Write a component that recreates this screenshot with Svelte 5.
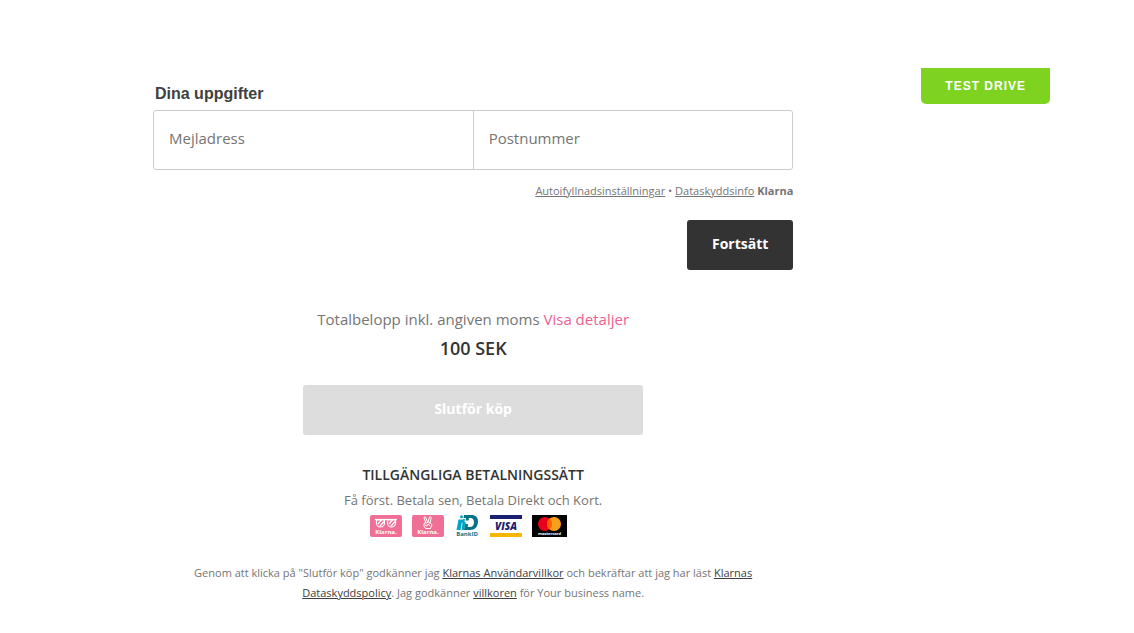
<script lang="ts">
  let email = $state("");
  let postcode = $state("");
  let amount = $state(100);
</script>

<div class="page">
  <main class="checkout">
    <form class="details" onsubmit={(e) => e.preventDefault()}>
      <h2>Dina uppgifter</h2>
      <div class="fields">
        <input type="email" aria-label="Mejladress" placeholder="Mejladress" bind:value={email} />
        <input type="text" aria-label="Postnummer" placeholder="Postnummer" bind:value={postcode} />
      </div>
      <p class="info">
        <a href="#autofill">Autoifyllnadsinställningar</a> • <a href="#privacy">Dataskyddsinfo</a>
        <strong>Klarna</strong>
      </p>
      <button class="btn continue" type="submit">Fortsätt</button>
    </form>

    <section class="summary">
      <p class="total">Totalbelopp inkl. angiven moms <a href="#details">Visa detaljer</a></p>
      <p class="amount">{amount} SEK</p>
      <button class="btn buy" type="button" disabled>Slutför köp</button>
    </section>

    <section class="methods">
      <h3>TILLGÄNGLIGA BETALNINGSSÄTT</h3>
      <p>Få först. Betala sen, Betala Direkt och Kort.</p>
      <div class="logos">
        <svg width="32" height="22" viewBox="0 0 32 22" role="img" aria-label="Klarna, betala sen">
          <rect width="32" height="22" rx="2" fill="#ef6f96" />
          <g fill="none" stroke="#fff" stroke-width="1.200">
            <path d="M5 4.500h22" />
            <path d="M6.500 5v3a4 4 0 0 0 8 0V5zM17.500 5v3a4 4 0 0 0 8 0V5z" />
            <path d="M8 9l3.500-4M10 11l4-4.500M19 9l3.500-4M21 11l4-4.500" />
          </g>
          <text x="16" y="19" text-anchor="middle" fill="#fff">Klarna.</text>
        </svg>
        <svg width="32" height="22" viewBox="0 0 32 22" role="img" aria-label="Klarna, betala direkt">
          <rect width="32" height="22" rx="2" fill="#ef6f96" />
          <g fill="none" stroke="#fff" stroke-width="1" stroke-linecap="round" stroke-linejoin="round">
            <path d="M14 8l-2-5q0-1.500 1.500-1l2 5M16 7l1.500-5q1.500-.8 1.700.6L18 8" />
            <path d="M12 9q0-1.500 1.500-1.200L15 8l1-1 3 1.500 1 1.500-1.500 3.500h-5L12 11zM13 10l2 1 1-2 2 2" />
          </g>
          <text x="16" y="19" text-anchor="middle" fill="#fff">Klarna.</text>
        </svg>
        <svg width="26" height="22" viewBox="0 0 26 22" role="img" aria-label="BankID">
          <path fill="#00a5c7" d="M4.500 4.500h4L6.500 15H2.500zM9 4h2l-.5 3 2 1-1.200 1L10 15H7.500L8.500 8l-1-1z" />
          <circle cx="7.500" cy="1.800" r="1.500" fill="#00a5c7" />
          <path fill="#087387" d="M10 0h7c5 0 7 2.500 7 6.500 0 5-3 8.500-8 8.500h-6l1.200-6h3l-.6 3h2c3 0 4.400-2 4.400-4.800C20 4.500 18.500 3 16 3h-1l-.4 2.500h-3L12 3H9.500z" />
          <text x="13" y="21" text-anchor="middle" fill="#087387">BankID</text>
        </svg>
        <svg width="32" height="22" viewBox="0 0 32 22" role="img" aria-label="Visa">
          <rect width="32" height="22" fill="#fff" />
          <rect width="32" height="4" fill="#1a1f71" />
          <rect y="18" width="32" height="4" fill="#f7b600" />
          <text class="visa" x="16" y="15" text-anchor="middle" fill="#1a1f71">VISA</text>
        </svg>
        <svg width="35" height="22" viewBox="0 0 35 22" role="img" aria-label="Mastercard">
          <rect width="35" height="22" fill="#000" />
          <circle cx="13" cy="9" r="7" fill="#eb001b" />
          <circle cx="22" cy="9" r="7" fill="#f79e1b" />
          <path fill="#ff5f00" d="M17.500 3.600a7 7 0 0 1 0 10.800 7 7 0 0 1 0-10.800z" />
          <text class="mc" x="17.500" y="20" text-anchor="middle" fill="#fff">mastercard</text>
        </svg>
      </div>
    </section>

    <p class="terms">
      Genom att klicka på "Slutför köp" godkänner jag <a href="#terms">Klarnas Användarvillkor</a> och bekräftar
      att jag har läst <a href="#policy">Klarnas Dataskyddspolicy</a>. Jag godkänner
      <a href="#conditions">villkoren</a> för Your business name.
    </p>
  </main>
  <div class="badge">TEST DRIVE</div>
</div>

<style>
  :global(body) {
    background: #fff;
  }
  .page {
    display: flex;
    align-items: flex-start;
    gap: 128px;
    max-width: 897px;
    margin: 0 auto;
    padding: 68px 84px 32px 153px;
    color: #757575;
    font-family: "Open Sans", "Noto Sans", sans-serif;
    font-size: 15px;
    line-height: 24px;
  }
  h2,
  h3,
  p {
    margin: 0;
  }
  .checkout {
    flex: 1;
    padding-top: 14px;
    text-align: center;
  }
  .details {
    display: flex;
    flex-direction: column;
  }
  h2 {
    padding: 0 2px 4px;
    color: #404040;
    font-family: "Liberation Sans", Arial, sans-serif;
    font-size: 16px;
    text-align: left;
  }
  .fields {
    display: flex;
    height: 58px;
    border: 1px solid #ccc;
    border-radius: 3px;
  }
  input {
    flex: 1;
    box-sizing: border-box;
    min-width: 0;
    padding: 0 15px 4px;
    border: 0;
    background: none;
    color: #333;
    font: inherit;
  }
  input:first-child {
    border-right: 1px solid #ccc;
  }
  input::placeholder {
    color: #757575;
    opacity: 1;
  }
  .info {
    padding: 11px 0 19px;
    font-size: 11px;
    line-height: 20px;
    text-align: right;
  }
  a {
    color: inherit;
    text-decoration-thickness: 1px;
    text-underline-offset: 1px;
  }
  .btn {
    height: 50px;
    padding: 0 25px 2px;
    border: 0;
    border-radius: 3px;
    color: #fff;
    font: inherit;
    font-size: 14px;
    font-weight: 700;
  }
  .continue {
    align-self: flex-end;
    background: #333;
  }
  .summary {
    display: flex;
    flex-direction: column;
    align-items: center;
    padding: 37px 0 28px;
  }
  .total a {
    color: #ef6092;
    text-decoration: none;
  }
  .amount {
    padding: 5px 0 25px;
    color: #333;
    font-size: 18px;
    font-weight: 600;
  }
  .buy {
    width: 340px;
    max-width: 100%;
    background: #ddd;
  }
  .methods {
    font-size: 13px;
  }
  h3 {
    margin: 0 0 1px;
    color: #333;
    font-size: 14px;
    font-weight: 600;
  }
  .logos {
    display: flex;
    justify-content: center;
    padding-top: 3px;
  }
  .logos svg {
    margin-right: 10px;
  }
  .logos text {
    font-size: 6px;
    font-weight: 700;
  }
  .logos .visa {
    font-size: 10px;
    font-style: italic;
    font-weight: 800;
  }
  .logos .mc {
    font-size: 4px;
  }
  .terms {
    max-width: 600px;
    margin: 0 auto;
    padding-top: 26px;
    font-size: 11px;
    line-height: 20px;
  }
  .terms a {
    color: #404040;
  }
  .badge {
    padding: 6px 24px;
    border-radius: 0 0 5px 5px;
    background: #7ed321;
    color: #fff;
    font-family: "Liberation Sans", Arial, sans-serif;
    font-size: 12px;
    font-weight: 700;
    letter-spacing: 1px;
    white-space: nowrap;
  }
</style>
